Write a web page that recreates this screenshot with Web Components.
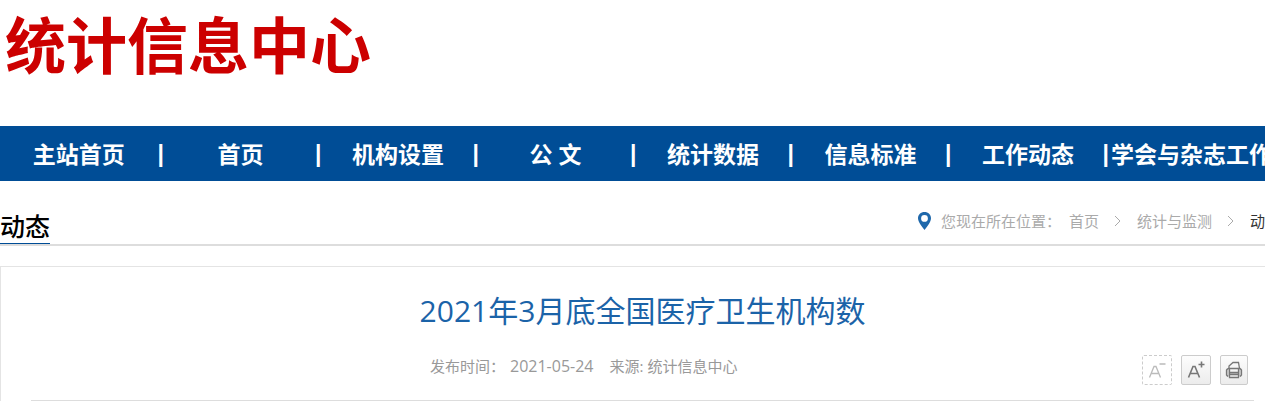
<!DOCTYPE html>
<html lang="zh-CN">
<head>
    <meta charset="UTF-8">
    <meta name="viewport" content="width=device-width, initial-scale=1">
    <title>2021年3月底全国医疗卫生机构数</title>
    <style>
        body {
            margin: 0;
            background: #fff;
            font-family: "Open Sans", "Noto Sans CJK SC", sans-serif;
            overflow-x: hidden;
        }
    </style>
</head>
<body>

<site-header>统计信息中心</site-header>

<nav-bar>
    <nav-item href="#main" first>主站首页</nav-item>
    <nav-item href="#home">首页</nav-item>
    <nav-item href="#org">机构设置</nav-item>
    <nav-item href="#doc">公 文</nav-item>
    <nav-item href="#data">统计数据</nav-item>
    <nav-item href="#standard">信息标准</nav-item>
    <nav-item href="#news">工作动态</nav-item>
    <nav-item href="#journal">学会与杂志工作</nav-item>
</nav-bar>

<section-head>
    <span slot="name">动态</span>
    <crumb-trail></crumb-trail>
</section-head>

<article-box>
    <span slot="title">2021年3月底全国医疗卫生机构数</span>
    <time slot="date" datetime="2021-05-24">2021-05-24</time>
    <span slot="source">统计信息中心</span>
</article-box>

<script>
    class BaseElement extends HTMLElement {
        constructor() {
            super();
            this.attachShadow({mode: 'open'}).innerHTML = this.render();
        }
    }

    class SiteHeader extends BaseElement {
        render() {
            return `
            <style>
                :host { display: block; padding: 0 5px 34px; }
                h1 { margin: 0; font-size: 61px; line-height: 92px; font-weight: 700; white-space: nowrap; }
                a { color: #c00; text-decoration: none; }
            </style>
            <h1><a href="#"><slot></slot></a></h1>`;
        }
    }
    customElements.define('site-header', SiteHeader);

    class NavBar extends BaseElement {
        render() {
            return `
            <style>
                :host { display: block; background: #004d96; overflow: hidden; }
                nav { display: flex; padding-right: 5px; }
            </style>
            <nav><slot></slot></nav>`;
        }
    }
    customElements.define('nav-bar', NavBar);

    class NavItem extends BaseElement {
        render() {
            return `
            <style>
                :host { display: flex; flex: 1 1 0; min-width: 0; padding-top: 1px; line-height: 54px; font-size: 23px; font-weight: 700; color: #fff; white-space: nowrap; }
                :host([first]) .bar { display: none; }
                .bar { font-family: "Liberation Sans", sans-serif; margin-right: 2px; }
                a { flex: 1 0 auto; text-align: center; color: inherit; text-decoration: none; }
            </style>
            <span class="bar">|</span><a><slot></slot></a>`;
        }
        connectedCallback() {
            this.shadowRoot.querySelector('a').href = this.getAttribute('href');
        }
    }
    customElements.define('nav-item', NavItem);

    class SectionHead extends BaseElement {
        render() {
            return `
            <style>
                :host { display: flex; justify-content: space-between; align-items: flex-end; padding-top: 17px; border-bottom: 2px solid #ddd; }
                h2 { margin: 0; font-size: 25px; line-height: 34px; font-weight: 500; color: #000; border-bottom: 1px solid #004d96; }
            </style>
            <h2><slot name="name"></slot></h2>
            <slot></slot>`;
        }
    }
    customElements.define('section-head', SectionHead);

    class CrumbTrail extends BaseElement {
        render() {
            const arrow = '<svg width="8" height="12" viewBox="0 0 8 12" aria-hidden="true"><path d="M1 1l5 5-5 5" fill="none" stroke="#aaa"/></svg>';
            return `
            <style>
                :host { display: block; margin-right: -15px; font-size: 15px; line-height: 46px; color: #aaa; white-space: nowrap; }
                nav, .path { display: flex; align-items: center; }
                .pin { margin-right: 9px; }
                .path { gap: 15px; margin-left: 8px; }
                a { color: inherit; text-decoration: none; }
                .here { color: #333; }
            </style>
            <nav aria-label="位置">
                <svg class="pin" width="15" height="20" viewBox="0 0 15 20" aria-hidden="true">
                    <path fill="#1f68ab" fill-rule="evenodd" d="M7.500 1C3.800 1 1 3.700 1 7.200c0 3.400 3.500 7.800 6.500 11.800 3-4 6.500-8.400 6.500-11.800C14 3.700 11.200 1 7.500 1zm0 3a3.400 3.400 0 1 1 0 6.800 3.400 3.400 0 0 1 0-6.800z"/>
                </svg>
                <span>您现在所在位置：</span>
                <span class="path">
                    <a href="#home">首页</a>${arrow}
                    <a href="#monitor">统计与监测</a>${arrow}
                    <a class="here" href="#news">动态</a>
                </span>
            </nav>`;
        }
    }
    customElements.define('crumb-trail', CrumbTrail);

    class ToolButton extends BaseElement {
        render() {
            return `
            <style>
                :host { display: block; }
                button { display: flex; align-items: center; justify-content: center; width: 30px; height: 30px; padding: 0; color: #777; border: 1px solid #ccc; border-radius: 2px; background: linear-gradient(#fdfdfd, #ececec); }
                :host([off]) button { color: #bbb; border: 1px dashed #ccc; background: #fff; }
                :host([narrow]) button { width: 28px; }
            </style>
            <button type="button"><slot></slot></button>`;
        }
        connectedCallback() {
            this.shadowRoot.querySelector('button').setAttribute('aria-label', this.getAttribute('label'));
        }
    }
    customElements.define('tool-button', ToolButton);

    class ArticleBox extends BaseElement {
        render() {
            return `
            <style>
                :host { display: block; margin: 20px -20px 0 0; padding: 0 30px; border: 1px solid #e4e4e4; border-bottom: 0; }
                h1 { margin: 0; padding-top: 19px; font-size: 30px; line-height: 50px; font-weight: 400; color: #1b63a8; text-align: center; }
                .info { display: flex; align-items: center; padding: 11px 6px 15px 399px; font-size: 15px; line-height: 38px; color: #999; border-bottom: 1px solid #ddd; white-space: nowrap; }
                .date { font-size: 16px; margin: 0 16px 0 5px; }
                .source { margin-left: 4px; }
                .tools { display: flex; gap: 9px; margin-left: auto; padding-top: 8px; }
                svg { display: block; fill: none; stroke: currentColor; }
            </style>
            <h1><slot name="title"></slot></h1>
            <div class="info">
                <span>发布时间：</span>
                <span class="date"><slot name="date"></slot></span>
                <span>来源:</span>
                <span class="source"><slot name="source"></slot></span>
                <div class="tools">
                    <tool-button off label="缩小字体">
                        <svg width="20" height="20" viewBox="0 0 20 20"><path stroke-width="1.300" d="M2.500 17.500L7 6.500h2l4.500 11M4.500 13.500h7M12.500 4h6"/></svg>
                    </tool-button>
                    <tool-button label="放大字体">
                        <svg width="20" height="20" viewBox="0 0 20 20"><path stroke-width="1.600" d="M2.500 17.500L7 6.500h2l4.500 11M4.500 13.500h7M12.500 4.500h6M15.500 1.500v6"/></svg>
                    </tool-button>
                    <tool-button narrow label="打印">
                        <svg width="18" height="18" viewBox="0 0 18 18"><path fill="#ccc" stroke="none" d="M1.500 7.500h3v8h-3zM13.500 7.500h3v8h-3zM4.500 11.500h9v2h-9z"/><path stroke-width="1.300" d="M4 7.500V5l4-3.500h5.500L14.500 7.500M3 7.500h12l1.500 1.500v5l-1.500 1.500M3 7.500L1.500 9v5L3 15.500M4.500 7.500v9h9v-9M4.500 11.500h9M4.500 13.500h9"/></svg>
                    </tool-button>
                </div>
            </div>`;
        }
    }
    customElements.define('article-box', ArticleBox);
</script>
</body>
</html>
